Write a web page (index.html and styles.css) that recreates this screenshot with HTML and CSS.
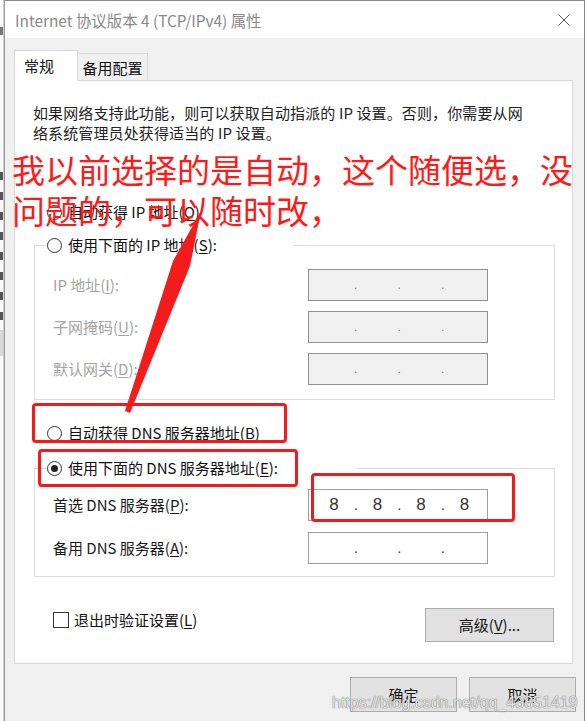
FILE: index.html
```html
<!DOCTYPE html>
<html lang="zh-CN">
<head>
<meta charset="utf-8">
<title>Internet 协议版本 4 (TCP/IPv4) 属性</title>
<link rel="stylesheet" href="styles.css">
</head>
<body>
<div class="screen">
  <div class="bgstrip">
    <span class="mark m-top"></span>
    <span class="mark m-tick first"></span>
    <span class="mark m-tick"></span>
    <span class="mark m-tick"></span>
    <span class="mark m-tick"></span>
    <span class="mark m-tick"></span>
    <span class="mark m-tick"></span>
    <span class="mark m-tick"></span>
    <span class="mark m-tick"></span>
    <span class="band"></span>
  </div>
  <div class="dialog">
    <div class="titlebar">
      <span class="title">Internet 协议版本 4 (TCP/IPv4) 属性</span>
      <svg class="close" width="12" height="12" viewBox="0 0 12 12"><path d="M0.5 0.5 L11.5 11.5 M11.5 0.5 L0.5 11.5" stroke="#555" stroke-width="1" fill="none"/></svg>
    </div>
    <div class="body">
      <div class="tabs">
        <div class="tab active">常规</div>
        <div class="tab">备用配置</div>
      </div>
      <div class="panel">
        <p class="desc">如果网络支持此功能，则可以获取自动指派的 IP 设置。否则，你需要从网<br>络系统管理员处获得适当的 IP 设置。</p>
        <div class="radio standalone"><span class="circle"></span>自动获得 IP 地址(<u>O</u>)</div>
        <fieldset class="group g-ip">
          <legend class="radio legend l-ip"><span class="circle"></span>使用下面的 IP 地址(<u>S</u>):</legend>
          <div class="row off">
            <span class="lbl">IP 地址(<u>I</u>):</span>
            <div class="ipfield disabled"><span class="seg"></span><span class="dot">.</span><span class="seg"></span><span class="dot">.</span><span class="seg"></span><span class="dot">.</span><span class="seg"></span></div>
          </div>
          <div class="row off">
            <span class="lbl">子网掩码(<u>U</u>):</span>
            <div class="ipfield disabled"><span class="seg"></span><span class="dot">.</span><span class="seg"></span><span class="dot">.</span><span class="seg"></span><span class="dot">.</span><span class="seg"></span></div>
          </div>
          <div class="row off">
            <span class="lbl">默认网关(<u>D</u>):</span>
            <div class="ipfield disabled"><span class="seg"></span><span class="dot">.</span><span class="seg"></span><span class="dot">.</span><span class="seg"></span><span class="dot">.</span><span class="seg"></span></div>
          </div>
        </fieldset>
        <div class="radio standalone dns-auto"><span class="circle"></span>自动获得 DNS 服务器地址(<u>B</u>)</div>
        <fieldset class="group g-dns">
          <legend class="radio legend l-dns"><span class="circle checked"></span>使用下面的 DNS 服务器地址(<u>E</u>):</legend>
          <div class="row">
            <span class="lbl">首选 DNS 服务器(<u>P</u>):</span>
            <div class="ipfield"><span class="seg">8</span><span class="dot">.</span><span class="seg">8</span><span class="dot">.</span><span class="seg">8</span><span class="dot">.</span><span class="seg">8</span></div>
          </div>
          <div class="row second">
            <span class="lbl">备用 DNS 服务器(<u>A</u>):</span>
            <div class="ipfield"><span class="seg"></span><span class="dot">.</span><span class="seg"></span><span class="dot">.</span><span class="seg"></span><span class="dot">.</span><span class="seg"></span></div>
          </div>
        </fieldset>
        <div class="footer-row">
          <div class="check"><span class="box"></span>退出时验证设置(<u>L</u>)</div>
          <button class="btn adv">高级(<u>V</u>)...</button>
        </div>
      </div>
      <div class="actions">
        <button class="btn act">确定</button>
        <button class="btn act">取消</button>
      </div>
    </div>
  </div>

  <div class="note">我以前选择的是自动，这个随便选，没<br>问题的，可以随时改，</div>
  <div class="redbox rb1"></div>
  <div class="redbox rb2"></div>
  <div class="redbox rb3"></div>
  <svg class="arrow" width="585" height="721" viewBox="0 0 585 721">
    <polygon points="201,211 190,266 130,413 125,411 173,261" fill="#f21c1c"/>
  </svg>
  <div class="watermark">https://blog.csdn.net/qq_43851419</div>
</div>
</body>
</html>
```
FILE: styles.css
```css
* { box-sizing: border-box; }

html, body {
  margin: 0;
  padding: 0;
}

body {
  width: 585px;
  height: 721px;
  overflow: hidden;
  font-family: "Noto Sans CJK SC", "Noto Sans", sans-serif;
  font-size: 15px;
  color: #1a1a1a;
  background: #f0f0f0;
}

.screen {
  position: relative;
  display: flex;
  width: 585px;
  height: 721px;
}

/* background window peeking at the left */
.bgstrip {
  width: 4px;
  height: 721px;
  background: #fbfbfb;
  display: flex;
  flex-direction: column;
  align-items: flex-start;
  border-right: 1px solid #d0d0d0;
}
.mark { display: block; background: #666; }
.m-top { width: 3px; height: 8px; margin-top: 27px; background: #777; }
.m-tick { width: 3px; height: 8px; margin-top: 12px; background: #555; }
.m-tick.first { margin-top: 137px; }
.band { width: 3px; height: 26px; margin-top: 10px; background: #d8d8d8; }

.dialog {
  width: 581px;
  height: 721px;
  display: flex;
  flex-direction: column;
  border: 1px solid #8a8a8a;
  border-bottom: none;
  border-left-color: #9a9a9a;
  background: #f0f0f0;
}

.titlebar {
  height: 37px;
  flex: none;
  background: #fff;
  display: flex;
  align-items: center;
  justify-content: space-between;
  padding: 0 14px 0 10px;
}
.title {
  font-size: 15.4px;
  color: #8a8a8a;
  line-height: 20px;
}
.close { display: block; }

.body {
  flex: 1;
  padding: 12px 10px 0 9px;
  display: flex;
  flex-direction: column;
}

.tabs {
  display: flex;
  align-items: flex-end;
  height: 30px;
}
.tab {
  line-height: 20px;
  font-size: 15px;
  color: #111;
}
.tab.active {
  position: relative;
  z-index: 1;
  width: 64px;
  height: 31px;
  margin-bottom: -1px;
  padding: 5px 0 0 9px;
  background: #fff;
  border: 1px solid #d9d9d9;
  border-bottom: none;
}
.tab:not(.active) {
  width: 70px;
  height: 27px;
  padding-top: 4px;
  text-align: center;
  background: #f0f0f0;
  border-top: 1px solid #d9d9d9;
  border-right: 1px solid #d9d9d9;
}

.panel {
  width: 559px;
  background: #fff;
  border: 1px solid #d9d9d9;
  padding: 0 17px 21px 19px;
  display: flex;
  flex-direction: column;
}

.desc {
  margin: 22px 0 0 -1px;
  line-height: 20px;
  font-size: 15px;
  letter-spacing: 0.12px;
  color: #222;
}

.radio {
  display: flex;
  align-items: center;
  height: 20px;
  line-height: 20px;
  font-size: 15px;
  color: #111;
  white-space: nowrap;
}
.radio.standalone { margin-left: 13px; margin-top: 59px; }
.radio.dns-auto { margin-top: 23px; }

.circle {
  width: 15px;
  height: 15px;
  border: 1px solid #333;
  border-radius: 50%;
  margin-right: 6px;
  display: flex;
  align-items: center;
  justify-content: center;
  flex: none;
  background: #fff;
}
.circle.checked::after {
  content: "";
  width: 7px;
  height: 7px;
  border-radius: 50%;
  background: #222;
}

u { text-decoration: underline; text-underline-offset: 2px; }

.group {
  margin: 13px 0 0 0;
  min-width: 0;
  border: 1px solid #dcdcdc;
  padding: 14px 0 14px 12px;
}
.g-dns {
  margin-top: 15px;
  padding-top: 11px;
  padding-bottom: 12px;
}
.legend {
  padding: 0;
  background: #fff;
}
.l-ip { width: 246px; }
.l-dns { width: 310px; }

.row {
  display: flex;
  align-items: center;
  height: 32px;
  padding-left: 6px;
}
.row + .row { margin-top: 10px; }
.row.second { margin-top: 11px; }
.lbl {
  width: 255px;
  line-height: 20px;
  color: #1a1a1a;
}
.row.off .lbl { color: #a3a3a3; }

.ipfield {
  width: 180px;
  height: 32px;
  border: 1px solid #a0a0a0;
  background: #fff;
  display: flex;
  align-items: center;
  padding-left: 6px;
  font-family: "Liberation Sans", Arial, sans-serif;
  font-size: 17px;
  color: #333;
}
.ipfield.disabled {
  background: #f0f0f0;
  border-color: #8f8f8f;
  color: #7c8098;
}
.seg {
  width: 38px;
  text-align: center;
  line-height: 20px;
}
.dot {
  width: 5.5px;
  text-align: center;
  line-height: 20px;
  font-size: 15px;
}
.ipfield.disabled .dot { font-size: 12px; }

.footer-row {
  margin-top: 31px;
  display: flex;
  justify-content: space-between;
  align-items: flex-start;
}
.check {
  display: flex;
  align-items: center;
  margin: 2px 0 0 19px;
  height: 20px;
  line-height: 20px;
  color: #111;
}
.box {
  width: 16px;
  height: 16px;
  border: 1px solid #333;
  margin-right: 5px;
  background: #fff;
}

.btn {
  font-family: "Noto Sans CJK SC", "Noto Sans", sans-serif;
  font-size: 15px;
  color: #111;
  background: #e1e1e1;
  border: 1px solid #adadad;
  padding: 0;
  line-height: 20px;
}
.adv {
  width: 129px;
  height: 34px;
  margin-right: 1px;
}

.actions {
  margin-top: 13px;
  margin-right: -2px;
  display: flex;
  justify-content: flex-end;
  gap: 12px;
}
.act {
  width: 107px;
  height: 35px;
}

/* annotations laid over the screenshot */
.note {
  position: absolute;
  left: 12px;
  top: 149px;
  font-family: "Noto Sans CJK SC", sans-serif;
  font-size: 33px;
  line-height: 41px;
  color: #ff1a1a;
  white-space: nowrap;
}
.redbox {
  position: absolute;
  border: 3px solid #f01c1c;
  border-radius: 4px;
}
.rb1 { left: 32px; top: 403px; width: 255px; height: 40px; }
.rb2 { left: 38px; top: 449px; width: 260px; height: 38px; }
.rb3 { left: 311px; top: 473px; width: 204px; height: 49px; }

.arrow {
  position: absolute;
  left: 0;
  top: 0;
  pointer-events: none;
}

.watermark {
  position: absolute;
  left: 332px;
  top: 692px;
  font-family: "Liberation Sans", Arial, sans-serif;
  font-size: 16px;
  line-height: 22px;
  color: rgba(255, 255, 255, 0.78);
  text-shadow: 0 0 1px #7a7a7a, 0 0 1px #7a7a7a;
  white-space: nowrap;
}
```
